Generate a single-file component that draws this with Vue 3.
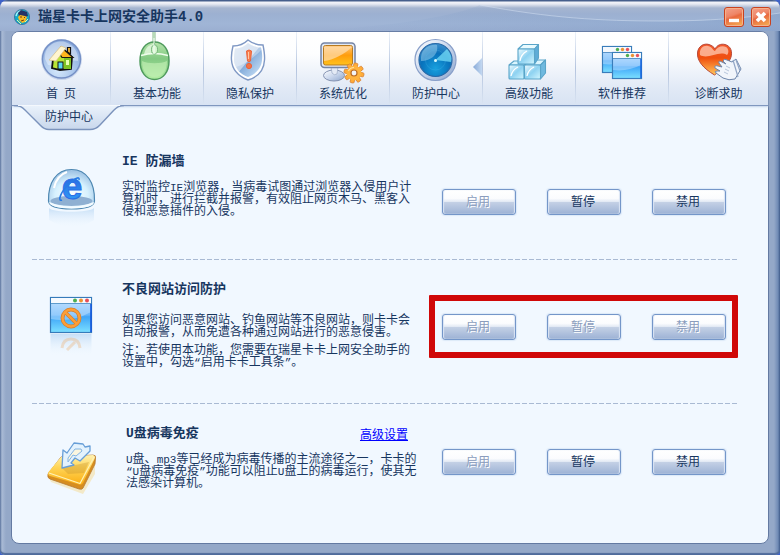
<script setup>
const navItems = [
  { id: 'home', label: '首\u2002页' },
  { id: 'mouse', label: '基本功能' },
  { id: 'shield', label: '隐私保护' },
  { id: 'tune', label: '系统优化' },
  { id: 'radar', label: '防护中心', active: true },
  { id: 'cubes', label: '高级功能' },
  { id: 'windows', label: '软件推荐' },
  { id: 'help', label: '诊断求助' },
]

const rows = [
  {
    id: 'leak',
    title: 'IE 防漏墙',
    paragraphs: [
      [
        ['实时监控', 'IE', '浏览器，当病毒试图通过浏览器入侵用户计'],
        ['算机时，进行拦截并报警，有效阻止网页木马、黑客入'],
        ['侵和恶意插件的入侵。'],
      ],
    ],
    enabled: [false, true, true],
  },
  {
    id: 'site',
    title: '不良网站访问防护',
    paragraphs: [
      [
        ['如果您访问恶意网站、钓鱼网站等不良网站，则卡卡会'],
        ['自动报警，从而免遭各种通过网站进行的恶意侵害。'],
      ],
      [
        ['注：若使用本功能，您需要在瑞星卡卡上网安全助手的'],
        ['设置中，勾选', '“', '启用卡卡工具条', '”', '。'],
      ],
    ],
    enabled: [false, false, false],
    marked: true,
  },
  {
    id: 'udisk',
    title: 'U盘病毒免疫',
    link: '高级设置',
    paragraphs: [
      [
        ['', 'U', '盘、', 'mp3', '等已经成为病毒传播的主流途径之一，卡卡的'],
        ['', '“U', '盘病毒免疫', '”', '功能可以阻止', 'U', '盘上的病毒运行，使其无'],
        ['法感染计算机。'],
      ],
    ],
    enabled: [false, true, true],
  },
]

const actionNames = ['启用', '暂停', '禁用']
const teeth = [0, 45, 90, 135, 180, 225, 270, 315]
</script>

<template>
  <div class="window">
    <svg class="defs" width="0" height="0" aria-hidden="true">
      <defs>
        <linearGradient id="gSilver" x1="0" y1="0" x2="1" y2="1">
          <stop offset="0" stop-color="#fff" /><stop offset=".5" stop-color="#c9d6ec" /><stop offset="1" stop-color="#8da5cc" />
        </linearGradient>
        <radialGradient id="gBall" cx=".4" cy=".8" r=".8">
          <stop offset="0" stop-color="#d4e8fc" /><stop offset="1" stop-color="#86a8dc" />
        </radialGradient>
        <linearGradient id="gGreen" x1="0" y1="0" x2="0" y2="1">
          <stop offset="0" stop-color="#b5e4ab" /><stop offset=".45" stop-color="#82c982" /><stop offset="1" stop-color="#b4efa4" />
        </linearGradient>
        <linearGradient id="gShield" x1="0" y1="0" x2="1" y2="1">
          <stop offset="0" stop-color="#d8e3f1" /><stop offset=".5" stop-color="#c3d5ec" /><stop offset=".52" stop-color="#86addb" /><stop offset="1" stop-color="#d2e8fa" />
        </linearGradient>
        <linearGradient id="gOrange" x1="0" y1="0" x2="0" y2="1">
          <stop offset="0" stop-color="#ffc578" /><stop offset=".5" stop-color="#ff9d0c" /><stop offset="1" stop-color="#ffc21c" />
        </linearGradient>
        <radialGradient id="gRadar" cx=".5" cy=".75" r=".75">
          <stop offset="0" stop-color="#18a0de" /><stop offset=".6" stop-color="#0871bb" /><stop offset="1" stop-color="#3d8ecb" />
        </radialGradient>
        <linearGradient id="gIce" x1="0" y1="0" x2="1" y2="1">
          <stop offset="0" stop-color="#eefbff" /><stop offset=".5" stop-color="#8ed2f1" /><stop offset="1" stop-color="#d3f6ff" />
        </linearGradient>
        <linearGradient id="gScreen" x1="0" y1="0" x2="0" y2="1">
          <stop offset="0" stop-color="#b6dcff" /><stop offset=".5" stop-color="#66b5fb" /><stop offset=".55" stop-color="#3fa5f8" /><stop offset="1" stop-color="#7ce0ff" />
        </linearGradient>
        <linearGradient id="gHeart" x1="0" y1="0" x2="0" y2="1">
          <stop offset="0" stop-color="#f2582d" /><stop offset=".45" stop-color="#f0500f" /><stop offset="1" stop-color="#ffc95c" />
        </linearGradient>
        <linearGradient id="gDrive" x1="0" y1="0" x2="0" y2="1">
          <stop offset="0" stop-color="#fff2b4" /><stop offset=".4" stop-color="#ffd659" /><stop offset="1" stop-color="#fbae12" />
        </linearGradient>
        <radialGradient id="gDome" cx=".5" cy=".65" r=".6">
          <stop offset="0" stop-color="#ffffff" /><stop offset=".6" stop-color="#d6f1fe" /><stop offset="1" stop-color="#a2c6e6" />
        </radialGradient>
        <linearGradient id="gE" x1="0" y1="0" x2="0" y2="1">
          <stop offset="0" stop-color="#2457d8" /><stop offset="1" stop-color="#33a5fa" />
        </linearGradient>
        <linearGradient id="gFade" x1="0" y1="0" x2="0" y2="1">
          <stop offset="0" stop-color="#9ec7ee" stop-opacity=".5" /><stop offset="1" stop-color="#e6f3fe" stop-opacity="0" />
        </linearGradient>
        <linearGradient id="gTab" x1="0" y1="0" x2="0" y2="1">
          <stop offset="0" stop-color="#eaf2fb" /><stop offset="1" stop-color="#c8d7ec" />
        </linearGradient>
        <linearGradient id="gSwoosh" x1="0" y1="0" x2="1" y2="0">
          <stop offset="0" stop-color="#7897c4" stop-opacity="0" /><stop offset="1" stop-color="#7897c4" stop-opacity=".4" />
        </linearGradient>
      </defs>
    </svg>

    <header class="titlebar">
      <svg class="swoosh" viewBox="0 0 780 31" preserveAspectRatio="none" aria-hidden="true">
        <path d="M300 31C400 27 460 14 480 5C550 18 600 21 660 21C710 21 745 18 780 13V31Z" fill="url(#gSwoosh)" />
        <path d="M480 5C550 18 600 21 660 21C710 21 745 18 780 13" fill="none" stroke="#d7e3f3" stroke-opacity=".5" stroke-width="1" />
      </svg>
      <svg class="logo" viewBox="0 0 16 16" aria-hidden="true">
        <circle cx="8" cy="8" r="7.6" fill="#16a9c7" stroke="#35709a" stroke-width=".8" />
        <path d="M2 7Q3 2 8 2" fill="none" stroke="#a6f4fa" stroke-width="1.4" />
        <path d="M4 4L7 1L13 3L14 7L11 8L5 7Z" fill="#263466" />
        <path d="M6 6L11 7L13 8L11 13L8 14L5 11L4 8Z" fill="#f6bb24" />
        <path d="M6 8L8 8M10 9L11 8M7 12L10 11" stroke="#7a3b12" stroke-width="1" />
        <path d="M3 11L7 15M11 13L14 10" stroke="#e8f79a" stroke-width="1" />
      </svg>
      <h1>瑞星卡卡上网安全助手4.0</h1>
      <button class="winbtn" type="button" aria-label="最小化">
        <svg viewBox="0 0 18 18"><path d="M4 12.5H14" stroke="#fff" stroke-width="3.4" /></svg>
      </button>
      <button class="winbtn" type="button" aria-label="关闭">
        <svg viewBox="0 0 18 18"><path d="M5 5L13 13M13 5L5 13" stroke="#fff" stroke-width="3.6" /></svg>
      </button>
    </header>

    <div class="panel">
      <nav class="nav">
        <a v-for="item in navItems" :key="item.id" href="#" class="nav-item">
          <svg class="nav-icon" viewBox="0 0 48 48" aria-hidden="true">
            <g v-if="item.id === 'home'">
              <circle cx="24.5" cy="22.5" r="20.5" fill="#a7bbe0" fill-opacity=".5" />
              <circle cx="24.5" cy="22" r="19" fill="url(#gBall)" stroke="#7590c6" stroke-width="1.4" />
              <path d="M8 22C7 8 20 3 28 5C38 8 42 17 41 24C32 21 20 30 11 28Z" fill="#fff" fill-opacity=".38" />
              <path d="M16 22L26 12L35 20L34 32L23 33L15 31Z" fill="#b8e436" stroke="#111" stroke-width="1.8" />
              <path d="M27 32V19L34 20V32Z" fill="#7ec424" />
              <path d="M30.500 10.500H33.500V17L30.500 15Z" fill="#ffbd36" stroke="#111" stroke-width="1.2" />
              <path d="M24 10L36 20.500H25L22 16Z" fill="#ffb71c" stroke="#1a1a10" stroke-width="1.2" />
              <path d="M12 23L24 9L29 11L19 24Z" fill="#fff5cf" stroke="#d5bd83" stroke-width=".7" />
              <rect x="21" y="25" width="5" height="7" fill="#5ad6ef" stroke="#111" stroke-width="1" />
              <rect x="29" y="23" width="3" height="5" fill="#e9ffb0" />
            </g>
            <g v-else-if="item.id === 'mouse'">
              <path d="M21 -5V5" stroke="#86b98b" stroke-width="3" /><path d="M21 -5V8" stroke="#e8fbe5" stroke-width="1" />
              <path d="M21.500 5C31 5 36 13 36 24C36 35 30 42.500 21.500 42.500C13 42.500 7 35 7 24C7 13 12 5 21.500 5Z" fill="url(#gGreen)" stroke="#4f9a5d" stroke-width="1.5" />
              <path d="M9 24C15 27 28 27 34 24C34 34 29 40 21.500 40C14 40 9 34 9 24Z" fill="#c3efb6" fill-opacity=".65" />
              <path d="M12 14C14 9 18 7 21 7V13L17 17H11Z" fill="#e4f7df" fill-opacity=".8" />
              <path d="M8 18.500Q21.500 14.500 35 18.500" fill="none" stroke="#effdec" stroke-width="1.5" />
              <path d="M21.500 6V17" stroke="#3e884b" stroke-width="1" />
              <ellipse cx="21.500" cy="12.500" rx="3" ry="4.500" fill="#d9f5d3" stroke="#60aa68" stroke-width=".8" />
              <path d="M21 1V17" stroke="#f5fff5" stroke-width="1" />
            </g>
            <g v-else-if="item.id === 'shield'">
              <path d="M22 3C27 7 32 8 37 8C38 13 39 18 38.500 23C38 33 32 40 22 43C12 39 6 32 5.500 23C5 17 6 13 7 9C13 9 18 7 22 3Z" fill="#fff" stroke="#7f98c4" stroke-width="1.4" />
              <path d="M22 6C27 9.500 31 10.500 35 10.500C36 15 36.500 19 36 23C35.500 31 30 37 22 40C14 37 8.500 31 8 23C8 18 8.500 15 9 11.500C14 11.500 18 10 22 6Z" fill="url(#gShield)" />
              <path d="M10 30C18 28 29 20 36 12L35 10.500C31 10.500 27 9 22 6C18 10 14 11.500 9 11.500C7.500 19 7.500 25 10 30Z" fill="#fff" fill-opacity=".35" />
              <path d="M20.500 14Q23 12 25.500 14L24.500 24Q23 26 21.500 24Z" fill="#fa7d4b" stroke="#e9633c" stroke-width="1" />
              <circle cx="23" cy="29" r="2.600" fill="#f47446" stroke="#e9633c" stroke-width="1" />
              <path d="M22.500 15V22" stroke="#ffc7a5" stroke-width="1" />
            </g>
            <g v-else-if="item.id === 'tune'">
              <ellipse cx="15" cy="38.500" rx="10.500" ry="5.500" fill="url(#gSilver)" stroke="#8593b2" stroke-width="1" />
              <path d="M12 30H19L18 37Q15 39 13 36Z" fill="#e4eaf5" stroke="#9ba9c4" stroke-width=".7" />
              <rect x="2" y="6" width="34" height="24.500" rx="3.500" fill="#e2e8f2" stroke="#7484a5" stroke-width="1.5" />
              <rect x="4.500" y="8.500" width="29" height="19.500" rx="2" fill="url(#gOrange)" stroke="#b77a1f" stroke-width="1" />
              <path d="M5 24C14 23 26 17 33 10V9.500H5Z" fill="#ffe4bd" fill-opacity=".65" />
              <g stroke="#d98334" stroke-width=".8" fill="#ffac38">
                <rect v-for="t in teeth" :key="t" x="33" y="26" width="4" height="6" rx="1" :transform="`rotate(${t + 12} 35 36)`" />
              </g>
              <circle cx="35" cy="36" r="7.500" fill="#ffb33e" />
              <circle cx="35" cy="36" r="3" fill="#f3f4f8" stroke="#bb6d27" stroke-width="1.2" />
              <path d="M29.500 34Q31 30.500 35 30.500" fill="none" stroke="#ffe2a0" stroke-width="1.2" />
            </g>
            <g v-else-if="item.id === 'radar'">
              <circle cx="23.500" cy="23" r="20.500" fill="url(#gSilver)" stroke="#889fc9" stroke-width="1.2" />
              <circle cx="23.500" cy="23" r="16.500" fill="url(#gRadar)" stroke="#2869a8" stroke-width="1.200" />
              <path d="M23.500 23L35 12Q41 19 39 25Z" fill="#74dcf7" fill-opacity=".75" />
              <path d="M9 20C10 11 18 7 25 8C27 17 19 24 9 24Z" fill="#c0e8fa" fill-opacity=".4" />
              <circle cx="23.500" cy="23" r="10" fill="none" stroke="#5fc3ee" stroke-opacity=".2" />
              <circle cx="23.500" cy="23.500" r="1.500" fill="#d9fbff" />
            </g>
            <g v-else-if="item.id === 'cubes'" stroke="#5aa5c9" stroke-width="1.1" stroke-linejoin="round">
              <path d="M4 28L9 24H23L19 28Z" fill="#daf5fe" /><rect x="4" y="28" width="15" height="14" rx="1" fill="url(#gIce)" />
              <path d="M19.500 28L25 23H40.500L35.500 28Z" fill="#daf5fe" /><path d="M35.500 28L40.500 23V36L35.500 42Z" fill="#6fb9df" />
              <rect x="19.500" y="28" width="16" height="14" rx="1" fill="url(#gIce)" />
              <path d="M13 12L18 7.500H33.500L29.500 12Z" fill="#e9fbff" /><path d="M29.500 12L33.500 7.500V21L29.500 27Z" fill="#5facd7" />
              <rect x="13" y="12" width="16.500" height="15" rx="1" fill="url(#gIce)" />
              <path d="M15 24Q16 17 22 14M6 39Q7 33 13 30M22 39Q23 33 29 30" fill="none" stroke="#fff" stroke-width="1.3" />
            </g>
            <g v-else-if="item.id === 'windows'">
              <g v-for="w in [[4, 9], [14, 15]]" :key="w[0]" :transform="`translate(${w[0]} ${w[1]})`">
                <rect x=".5" y=".5" width="29" height="26" fill="url(#gScreen)" stroke="#397dbb" stroke-width="1.200" />
                <rect x="1" y="1" width="28" height="5" fill="#f4f8fd" /><path d="M1 6.500H29" stroke="#5a94c8" />
                <path d="M1 7H29V13Q15 20 1 18Z" fill="#d9ecff" fill-opacity=".4" />
                <path d="M29 7V26" stroke="#1764df" stroke-width="1.5" />
                <circle cx="15.500" cy="3.500" r="1.700" fill="#4fae50" /><circle cx="20.500" cy="3.500" r="1.700" fill="#e99335" /><circle cx="25.500" cy="3.500" r="1.700" fill="#e7525c" />
              </g>
            </g>
            <g v-else>
              <path d="M19.500 38C8 31 2 24 2.500 16C3 9 9 6 14 7.500C17 8.500 19 10 20 12C22 8 26 6.500 30 7.500C36 9 37.500 15 36 20C34 27 26 33 19.500 38Z" fill="url(#gHeart)" stroke="#b94a3b" stroke-width="1" />
              <path d="M5 18C4 11 9 8 13 9C18 10 18 14 20 14C22 10 27 8 31 10C34 12 34 16 32 18C24 13 13 23 5 18Z" fill="#ffd3bd" fill-opacity=".7" />
              <path d="M41 22L46 32L40 42Q34 44 28 41L21 36Q19 34 22 34L25 34L20 31Q19 28 23 29L27 30L24 26Q23 23 27 25L31 27L28 24Q29 21 32 23L37 25Z" fill="#f1f5fb" stroke="#6e86ab" stroke-width="1" stroke-linejoin="round" />
              <path d="M38 23L43 40M41 23L45 34" stroke="#91a5c5" stroke-width="1.2" />
              <path d="M31 29L35 31M30 32L34 34M29 35L33 37" stroke="#b7c6dc" stroke-width="1" />
            </g>
          </svg>
          <span class="nav-label">{{ item.label }}</span>
          <i v-if="item.active" class="nav-mark"></i>
        </a>
        <div class="tab">
          <svg class="tab-shape" viewBox="0 0 110 26" aria-hidden="true">
            <path d="M0 0.500C6 0.500 8 2 11 5L26 20Q30 24.500 35 24.500H76Q82 24.500 86 20L100 5Q104 0.500 110 0.500" fill="url(#gTab)" stroke="#7b93bc" stroke-width="1.4" />
            <path d="M4 0.500H106" stroke="#f4f8fd" stroke-width="1" />
          </svg>
          <span>防护中心</span>
        </div>
      </nav>

      <main class="body">
        <section v-for="row in rows" :key="row.id" class="row" :class="row.id">
          <svg class="row-icon" viewBox="0 0 50 60" aria-hidden="true">
            <g v-if="row.id === 'leak'">
              <path d="M2 40C6 45 42 45 47 40V52Q26 66 2 52Z" fill="url(#gFade)" />
              <path d="M1.500 33C1 15 9 1.500 24.500 1.500C40 1.500 48 15 47.500 33C47 39 38 41 24.500 41C11 41 2 39 1.500 33Z" fill="url(#gDome)" stroke="#4d87b1" stroke-width="1.2" />
              <ellipse cx="24.500" cy="33" rx="21" ry="5" fill="#8fb0d2" />
              <path d="M2 34Q24 43 47 34Q47 40 24.500 40.500Q3 40 2 34Z" fill="#f4fbff" />
              <text x="25" y="31" text-anchor="middle" font-family="Liberation Sans, sans-serif" font-size="37" font-weight="bold" fill="url(#gE)" stroke="#2b6fe6" stroke-width="1">e</text>
              <path d="M15 32C10 34 14 23 22 16C28 10 33 8 32 12" fill="none" stroke="#287be4" stroke-width="1.600" />
              <path d="M7 20C9 10 14 6 20 4" fill="none" stroke="#fff" stroke-width="2" />
            </g>
            <g v-else-if="row.id === 'site'">
              <rect x="3.500" y="38" width="41" height="21" fill="url(#gFade)" />
              <path d="M15 52Q16 43 24 43Q32 43 33 52M28 46L20 54" fill="none" stroke="#efb06c" stroke-opacity=".35" stroke-width="3" />
              <rect x="3.500" y="1.500" width="41" height="35" fill="url(#gScreen)" stroke="#367bba" stroke-width="1.2" />
              <rect x="4" y="2" width="40" height="5" fill="#f6faff" /><path d="M4 7.500H44" stroke="#5f9ccd" />
              <path d="M4 8H44V16Q24 27 4 23Z" fill="#d7ebff" fill-opacity=".4" />
              <path d="M44 8V36" stroke="#1357dd" stroke-width="1.6" />
              <circle cx="28" cy="4.500" r="2" fill="#4bae50" /><circle cx="34" cy="4.500" r="2" fill="#ed9332" /><circle cx="40" cy="4.500" r="2" fill="#e64f57" />
              <circle cx="24" cy="22" r="8.500" fill="none" stroke="#d77f2a" stroke-width="3.800" /><path d="M18 16L30 28" stroke="#d77f2a" stroke-width="3.800" />
              <circle cx="24" cy="22" r="8.500" fill="none" stroke="#fb9e38" stroke-width="2.400" /><path d="M18 16L30 28" stroke="#fb9e38" stroke-width="2.400" />
            </g>
            <g v-else stroke-linejoin="round">
              <path d="M2 38L34 50L48 24V34L36 54L4 42Z" fill="#f4dc9a" fill-opacity=".55" />
              <path d="M14 17L46 15Q49 15 48.500 18L48 24L36 48Q35 50 32 49L3 39Q0 38 1 34Z" fill="#d68d20" stroke="#b5792e" stroke-width=".8" />
              <path d="M14 17L46 15Q49 16 47.500 19L36 43Q34.500 45.500 32 44.500L3 36Q0 35 1.500 32Z" fill="url(#gDrive)" />
              <path d="M2 33L33 43.500L47 17" fill="none" stroke="#fff2b6" stroke-width="1.2" />
              <path d="M15 28L42 22L37 33L21 34Z" fill="#bd8929" fill-opacity=".3" />
              <path d="M15 28L16 10L20 13L27 3L36 4L38 7L43 6L43 11L33 21L28 18L24 23L27 25Z" fill="#e3f2fd" stroke="#679ed7" stroke-width="1.300" />
              <path d="M21 18L28 9L34 9L35 11L29 16L26 15L21 22Z" fill="#fbf6df" stroke="#82b4e4" stroke-width="1" />
            </g>
          </svg>

          <div class="text">
            <div class="heading">
              <h2>{{ row.title }}</h2>
              <a v-if="row.link" href="#">{{ row.link }}</a>
            </div>
            <p v-for="(lines, p) in row.paragraphs" :key="p">
              <span v-for="(parts, l) in lines" :key="l" class="line"><span v-for="(part, i) in parts" :key="i" :class="{ half: i % 2 === 1 }">{{ part }}</span></span>
            </p>
          </div>

          <div class="actions" :class="{ marked: row.marked }">
            <button v-for="(name, i) in actionNames" :key="name" type="button" class="action" :disabled="!row.enabled[i]">{{ name }}</button>
          </div>
        </section>
      </main>
    </div>
  </div>
</template>

<style>
body {
  background: #3f63c8;
}
</style>

<style scoped>
.window {
  box-sizing: border-box;
  min-height: 100vh;
  padding: 0 11px 11px;
  display: flex;
  flex-direction: column;
  position: relative;
  border-radius: 8px 8px 5px 5px;
  background: linear-gradient(90deg, #5d779f 0, #a9bad5 2px, #94a8c8 6px, #94a8c8 calc(100% - 6px), #6f8ab5 calc(100% - 2px), #3e5a88 100%);
  box-shadow: inset 0 -2px 1px #4f6b9b;
  color: #17365f;
  font: 12px/12px "Noto Sans CJK SC", sans-serif;
}
.defs {
  position: absolute;
}
.titlebar {
  height: 31px;
  margin: 0 -11px;
  padding: 2px 9px 0 14px;
  box-sizing: border-box;
  display: flex;
  align-items: center;
  position: relative;
  border-radius: 8px 8px 0 0;
  background: linear-gradient(#465f8c 0, #465f8c 1px, #f4f5fa 2px, #e6e9f2 4px, #a5b5d0 8px, #9cb0d1 14px, #a0b5d6 24px, #9bafd1 31px);
  overflow: hidden;
}
.swoosh {
  position: absolute;
  inset: 0;
  width: 100%;
  height: 100%;
}
.logo {
  width: 16px;
  height: 16px;
  position: relative;
}
h1 {
  flex: 1;
  margin: 0 0 0 8px;
  position: relative;
  font: bold 14px/20px "Liberation Mono", "Noto Sans CJK SC", monospace;
}
.winbtn {
  width: 20px;
  height: 20px;
  margin-left: 7px;
  padding: 0;
  position: relative;
  border: 1px solid #c9421f;
  border-radius: 3px;
  background: linear-gradient(160deg, #f4a28c 0, #ee8566 40%, #e9683f 50%, #f6b553 100%);
  box-shadow: inset 0 0 0 1px #f6b18c;
}
.winbtn svg {
  display: block;
  width: 18px;
  height: 18px;
}
.panel {
  flex: 1;
  border: 1px solid #647aa2;
  border-radius: 8px;
  background: #f1f8ff;
}
.nav {
  display: grid;
  grid-template-columns: 99fr repeat(6, 93fr) 99fr;
  height: 74px;
  box-sizing: border-box;
  position: relative;
  border-bottom: 1px solid #7f97bf;
  border-radius: 7px 7px 0 0;
  background: linear-gradient(#fff 0, #fdfeff 30%, #e2eaf6 75%, #d8e3f3 100%);
  box-shadow: 0 1px 2px #c3d3ea;
}
.nav-item {
  display: flex;
  flex-direction: column;
  align-items: center;
  padding-top: 5px;
  position: relative;
  color: inherit;
  text-decoration: none;
}
.nav-item:not(:nth-child(8)) {
  border-right: 1px solid;
  border-image: linear-gradient(#eef3fa, #b4c4de 50%, #dbe5f3) 1;
}
.nav-icon {
  width: 48px;
  height: 48px;
  overflow: visible;
}
.nav-label {
  line-height: 16px;
}
.nav-mark {
  position: absolute;
  right: 0;
  top: 26px;
  width: 9px;
  height: 18px;
  clip-path: polygon(100% 0, 100% 100%, 0 50%);
  background: linear-gradient(90deg, #87a9d8, #c3d8f1);
}
.tab {
  position: absolute;
  left: 2px;
  top: 73px;
  width: 110px;
  height: 26px;
  text-align: center;
  line-height: 22px;
}
.tab-shape {
  position: absolute;
  inset: 0;
  width: 110px;
  height: 26px;
}
.tab span {
  position: relative;
}
.body {
  padding: 26px 30px 0 20px;
}
.row {
  display: grid;
  grid-template-columns: 90px 1fr auto;
  align-items: start;
  box-sizing: border-box;
  min-height: 128px;
}
.row + .row {
  min-height: 144px;
}
.row:not(:last-child) {
  background: repeating-linear-gradient(90deg, #a9bad3 0, #a9bad3 5px, transparent 5px, transparent 7px) bottom / 100% 1px no-repeat;
}
.row:last-child {
  min-height: 128px;
}
.row-icon {
  width: 50px;
  height: 60px;
  margin: 36px 0 0 15px;
}
.text {
  padding-top: 22px;
}
.udisk .text {
  padding-left: 4px;
}
.heading {
  display: flex;
  justify-content: space-between;
  padding-right: 34px;
  margin-bottom: 10px;
  line-height: 16px;
}
.site .heading {
  margin-bottom: 15px;
}
.heading a {
  color: #00f;
}
h2 {
  margin: 0;
  font: bold 13px/16px "Liberation Mono", "Noto Sans CJK SC", monospace;
}
p {
  margin: 0 0 6px;
}
.line {
  display: block;
  white-space: nowrap;
}
.half {
  font: 11px/1px "Liberation Mono", monospace;
}
.actions {
  display: flex;
  gap: 31px;
  position: relative;
  margin: 57px 12px 0 0;
}
.site .actions {
  margin-top: 54px;
}
.udisk .actions {
  margin-top: 45px;
}
.marked::after {
  content: "";
  position: absolute;
  inset: -19px -12px -18px -13px;
  border: 6px solid #d00808;
  border-radius: 1px;
  pointer-events: none;
}
.action {
  width: 74px;
  height: 26px;
  padding: 0 2px 2px 0;
  border: 1px solid #7496c9;
  border-radius: 3px;
  background: linear-gradient(#fff 0, #fbfcfe 35%, #dfe7f3 50%, #c3d0e5 52%, #9db2d5 100%);
  box-shadow: inset 1px 0 1px #dbe5f4, inset -1px 0 1px #dbe5f4, 0 0 1px 1px #dce9f8;
  color: #17365f;
  font: 12px/16px "Noto Sans CJK SC", sans-serif;
}
.action:disabled {
  color: #8b9dbd;
  text-shadow: 1px 1px 0 #fff;
}
</style>
